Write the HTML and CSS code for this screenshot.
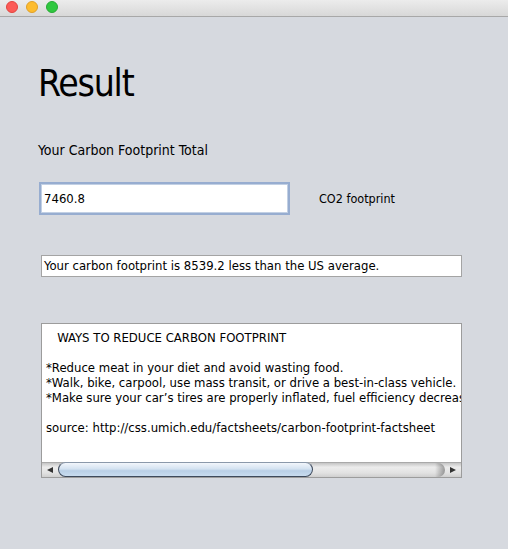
FILE: index.html
```html
<!DOCTYPE html>
<html>
<head>
<meta charset="utf-8">
<link rel="stylesheet" href="styles.css">
</head>
<body>
<div class="titlebar">
  <span class="light red"></span>
  <span class="light yellow"></span>
  <span class="light green"></span>
</div>
<main class="content">
  <h1 class="title">Result</h1>
  <div class="label">Your Carbon Footprint Total</div>
  <div class="row">
    <div class="field">7460.8</div>
    <div class="unit">CO2 footprint</div>
  </div>
  <div class="result">Your carbon footprint is 8539.2 less than the US average.</div>
  <div class="area">
    <div class="viewport"><div class="text">   WAYS TO REDUCE CARBON FOOTPRINT

*Reduce meat in your diet and avoid wasting food.
*Walk, bike, carpool, use mass transit, or drive a best-in-class vehicle.
*Make sure your car’s tires are properly inflated, fuel efficiency decreas

source: http://css.umich.edu/factsheets/carbon-footprint-factsheet</div></div>
    <div class="hscroll">
      <div class="btn left"><span class="tri-left"></span></div>
      <div class="track"><div class="thumb"></div><div class="trackend"></div></div>
      <div class="btn right"><span class="tri-right"></span></div>
    </div>
  </div>
</main>
</body>
</html>
```
FILE: styles.css
```css
html, body {
  margin: 0;
  padding: 0;
  background: #d6d9df;
  font-family: "DejaVu Sans Condensed", "DejaVu Sans", sans-serif;
  color: #000;
}
.titlebar {
  height: 17px;
  border-bottom: 1px solid #a8a8a8;
  background: linear-gradient(#ececec, #d8d8d8);
  display: flex;
  align-items: flex-start;
  padding: 1px 0 0 6px;
  box-sizing: border-box;
  gap: 8px;
}
.light {
  width: 12px;
  height: 12px;
  border-radius: 50%;
  box-sizing: border-box;
}
.red { background: #fc5b57; border: 1px solid #e2453f; }
.yellow { background: #fdbc2e; border: 1px solid #e0a028; }
.green { background: #2fc840; border: 1px solid #27aa35; }

.content {
  padding: 45px 0 0 38px;
}
.title {
  margin: 0;
  font-weight: normal;
  font-size: 37px;
  line-height: 44px;
  letter-spacing: -1.2px;
}
.label {
  margin-top: 36px;
  font-size: 14px;
  line-height: 17px;
}
.row {
  margin-top: 23px;
  display: flex;
  align-items: center;
}
.field {
  margin-left: 1px;
  width: 251px;
  height: 33px;
  box-sizing: border-box;
  background: #fff;
  border: 2px solid #97add0;
  box-shadow: inset 0 0 0 1px #c2d0e4;
  font-size: 13px;
  line-height: 29px;
  padding-left: 3px;
}
.unit {
  margin-left: 29px;
  font-size: 12.5px;
}
.result {
  margin: 40px 0 0 3px;
  width: 421px;
  height: 22px;
  box-sizing: border-box;
  background: #fff;
  border: 1px solid #a4a4a4;
  font-size: 13px;
  line-height: 20px;
  padding-left: 2px;
}
.area {
  margin: 46px 0 0 3px;
  width: 421px;
  height: 155px;
  box-sizing: border-box;
  border: 1px solid #9c9c9c;
  background: #fff;
  display: flex;
  flex-direction: column;
}
.viewport {
  flex: 1;
  overflow: hidden;
  padding: 6px 0 0 4px;
}
.text {
  white-space: pre;
  font-size: 13px;
  line-height: 15px;
}
.hscroll {
  height: 15px;
  display: flex;
  background: linear-gradient(#c4c4c4, #ececec 30%, #e2e2e2 70%, #cfcfcf);
  border-top: 1px solid #a9a9a9;
  box-sizing: border-box;
}
.btn {
  width: 16px;
  display: flex;
  align-items: center;
  justify-content: center;
}
.tri-left {
  width: 0; height: 0;
  border-top: 3.5px solid transparent;
  border-bottom: 3.5px solid transparent;
  border-right: 6px solid #333;
}
.tri-right {
  width: 0; height: 0;
  border-top: 3.5px solid transparent;
  border-bottom: 3.5px solid transparent;
  border-left: 6px solid #333;
}
.track {
  flex: 1;
  position: relative;
}
.thumb {
  position: absolute;
  left: 0;
  top: -1px;
  width: 255px;
  height: 15px;
  box-sizing: border-box;
  border-radius: 8px;
  border: 1px solid #3e4a5c;
  border-top-color: #8a98aa;
  background: linear-gradient(#f2f6fb, #d4e2f1 45%, #b9cfe6 60%, #c9dcef);
}
.trackend {
  position: absolute;
  right: 0;
  top: 0;
  width: 10px;
  height: 100%;
  border-radius: 0 8px 8px 0;
  background: linear-gradient(90deg, rgba(0,0,0,0), rgba(0,0,0,0.35));
}
```
